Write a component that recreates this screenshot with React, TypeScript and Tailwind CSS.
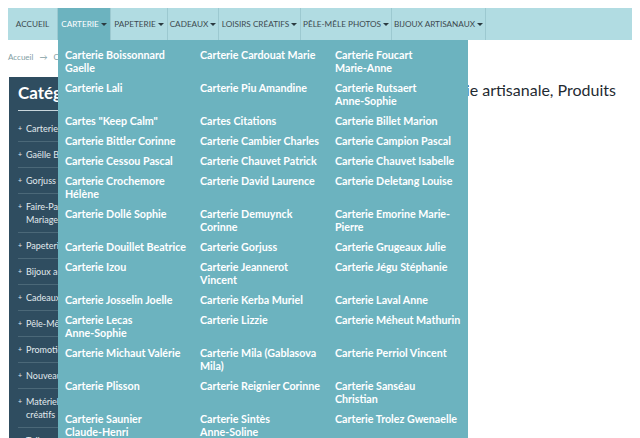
const navItems: { label: string; w: string; active?: boolean; caret?: boolean }[] = [
  { label: 'Accueil', w: 'w-[50px]' },
  { label: 'Carterie', w: 'w-[53px]', active: true, caret: true },
  { label: 'Papeterie', w: 'w-[57px]', caret: true },
  { label: 'Cadeaux', w: 'w-[51px]', caret: true },
  { label: 'Loisirs créatifs', w: 'w-[82px]', caret: true },
  { label: 'Pêle-mêle photos', w: 'w-[91px]', caret: true },
  { label: 'Bijoux artisanaux', w: 'w-[94px]', caret: true },
];

// '|' marks where the menu entry breaks onto a second line
const carteries = [
  'Carterie Boissonnard|Gaelle',
  'Carterie Cardouat Marie',
  'Carterie Foucart|Marie-Anne',
  'Carterie Lali',
  'Carterie Piu Amandine',
  'Carterie Rutsaert|Anne-Sophie',
  'Cartes "Keep Calm"',
  'Cartes Citations',
  'Carterie Billet Marion',
  'Carterie Bittler Corinne',
  'Carterie Cambier Charles',
  'Carterie Campion Pascal',
  'Carterie Cessou Pascal',
  'Carterie Chauvet Patrick',
  'Carterie Chauvet Isabelle',
  'Carterie Crochemore|Hélène',
  'Carterie David Laurence',
  'Carterie Deletang Louise',
  'Carterie Dollé Sophie',
  'Carterie Demuynck|Corinne',
  'Carterie Emorine Marie-|Pierre',
  'Carterie Douillet Beatrice',
  'Carterie Gorjuss',
  'Carterie Grugeaux Julie',
  'Carterie Izou',
  'Carterie Jeannerot|Vincent',
  'Carterie Jégu Stéphanie',
  'Carterie Josselin Joelle',
  'Carterie Kerba Muriel',
  'Carterie Laval Anne',
  'Carterie Lecas|Anne-Sophie',
  'Carterie Lizzie',
  'Carterie Méheut Mathurin',
  'Carterie Michaut Valérie',
  'Carterie Mila (Gablasova|Mila)',
  'Carterie Perriol Vincent',
  'Carterie Plisson',
  'Carterie Reignier Corinne',
  'Carterie Sanséau|Christian',
  'Carterie Saunier|Claude-Henri',
  'Carterie Sintès|Anne-Soline',
  'Carterie Trolez Gwenaelle',
];

const categories = [
  'Carterie',
  'Gaëlle Boissonnard',
  'Gorjuss',
  'Faire-Part de|Mariage',
  'Papeterie',
  'Bijoux artisanaux',
  'Cadeaux',
  'Pêle-Mêle photos',
  'Promotions',
  'Nouveautés',
  'Matériel loisirs|créatifs',
  'Toiles',
];

function Lines({ text }: { text: string }) {
  const parts = text.split('|');
  return (
    <>
      {parts.map((p, i) => (
        <span key={i} className="block whitespace-nowrap">
          {p}
        </span>
      ))}
    </>
  );
}

function Caret() {
  return <span className="ml-[2px] inline-block border-x-[3px] border-t-[3px] border-x-transparent border-t-[#2b3a40] align-middle" />;
}

export default function App() {
  return (
    <div className="h-[438px] w-[640px] overflow-hidden bg-white font-['Lato',sans-serif]">
      <div className="px-[8px] pt-[8px]">
        <nav className="relative flex h-[32px] bg-[#b1dce2]">
          {navItems.map((it) => (
            <div key={it.label} className={`relative ${it.w} shrink-0`}>
              <div
                className={`flex h-full items-center justify-center whitespace-nowrap border-r border-[#9cc9d0] text-[8.2px] uppercase ${
                  it.active ? 'bg-[#6cb3bf] text-white' : 'text-[#3d4a4f]'
                }`}
              >
                {it.label}
                {it.caret && <Caret />}
              </div>
              {it.active && (
                <div className="absolute left-0 top-full z-10 h-[400px] w-[410px] bg-[#6cb3bf] px-[7px] pt-[8px]">
                  <ul className="grid grid-cols-[128px_128px_128px] gap-x-[7px] gap-y-[7px] text-[10.7px] font-bold leading-[13px] text-white">
                    {carteries.map((c) => (
                      <li key={c}>
                        <Lines text={c} />
                      </li>
                    ))}
                  </ul>
                </div>
              )}
            </div>
          ))}
        </nav>

        <div className="mt-[11px] flex items-center gap-[6px] text-[8px] text-[#7f9ea4]">
          <span>Accueil</span>
          <span>→</span>
          <span>Carterie</span>
        </div>

        <div className="mt-[14px] flex">
          <aside className="ml-[1px] w-[160px] shrink-0 bg-[#2f4d60] pl-[9px]">
            <div className="mr-[8px] border-b border-[#c8d6dc] pb-[4px] pt-[3px] text-[17px] font-bold text-white">
              Catégories
            </div>
            <ul className="mt-[5px] text-[9px] leading-[13px] text-[#e1eaee]">
              {categories.map((c) => (
                <li key={c} className="flex border-b border-[#4b6878] py-[6px] pr-2">
                  <span className="mr-[4px] text-[7px]">+</span>
                  <span>
                    <Lines text={c} />
                  </span>
                </li>
              ))}
            </ul>
          </aside>
          <div className="min-w-0 flex-1 pr-[16px] pt-[1px]">
            <h1 className="whitespace-nowrap text-right text-[16px] text-[#1f2b32]">
              Boutique de Carterie artisanale, Produits
            </h1>
          </div>
        </div>
      </div>
    </div>
  );
}
